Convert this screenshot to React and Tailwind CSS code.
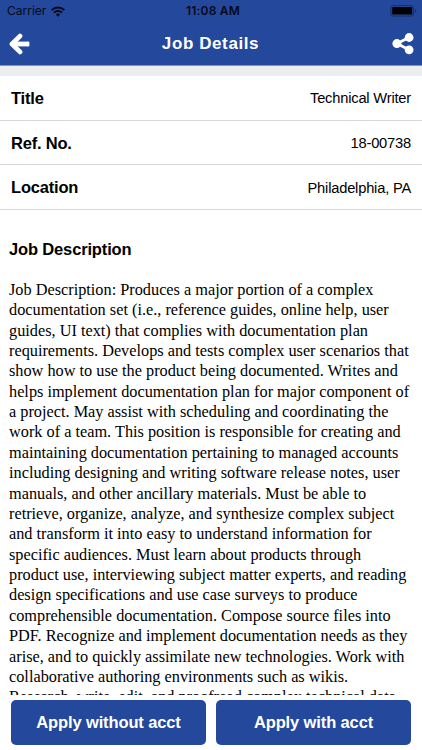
const details = [
  { label: 'Title', value: 'Technical Writer' },
  { label: 'Ref. No.', value: '18-00738' },
  { label: 'Location', value: 'Philadelphia, PA' },
];

const description = `Job Description: Produces a major portion of a complex
documentation set (i.e., reference guides, online help, user
guides, UI text) that complies with documentation plan
requirements. Develops and tests complex user scenarios that
show how to use the product being documented. Writes and
helps implement documentation plan for major component of
a project. May assist with scheduling and coordinating the
work of a team. This position is responsible for creating and
maintaining documentation pertaining to managed accounts
including designing and writing software release notes, user
manuals, and other ancillary materials. Must be able to
retrieve, organize, analyze, and synthesize complex subject
and transform it into easy to understand information for
specific audiences. Must learn about products through
product use, interviewing subject matter experts, and reading
design specifications and use case surveys to produce
comprehensible documentation. Compose source files into
PDF. Recognize and implement documentation needs as they
arise, and to quickly assimilate new technologies. Work with
collaborative authoring environments such as wikis.
Research, write, edit, and proofread complex technical data`;

const WifiIcon = () => (
  <svg width="14" height="11" viewBox="0 0 14 11" fill="none" stroke="#05081a" strokeWidth="1.9">
    <path d="M0.7 4.1a8.9 8.9 0 0 1 12.6 0" />
    <path d="M3 6.6a5.7 5.7 0 0 1 8 0" />
    <path d="M7 10.7 4.9 8.6a3 3 0 0 1 4.2 0z" fill="#05081a" stroke="none" />
  </svg>
);

const BatteryIcon = () => (
  <svg width="27" height="12" viewBox="0 0 27 12">
    <rect x="0.9" y="0.6" width="22.6" height="10.4" rx="2.2" fill="none" stroke="#162d66" strokeWidth="1" />
    <rect x="2.2" y="2" width="20" height="7.6" rx="0.8" fill="#000" />
    <path d="M25 4v3.8q1.4-.6 1.4-1.9T25 4z" fill="#162d66" />
  </svg>
);

const BackIcon = () => (
  <svg width="22" height="22" viewBox="0 0 22 22" fill="none" stroke="#fff" strokeWidth="4.8" strokeLinecap="round" strokeLinejoin="round">
    <path d="M12 3.1 4 11l8 7.9" />
    <path d="M5 11h15" strokeLinecap="butt" />
    <path d="M20.2 9.8v2.4" strokeWidth="2.4" />
  </svg>
);

const ShareIcon = () => (
  <svg width="22" height="22" viewBox="0 0 22 22" fill="#fff">
    <path d="M17 4.5 5 10.6l12 6.2" fill="none" stroke="#fff" strokeWidth="2.8" />
    <circle cx="4.9" cy="10.6" r="4.5" />
    <circle cx="17.1" cy="4.5" r="4.4" />
    <circle cx="17.1" cy="16.8" r="4.4" />
  </svg>
);

const App = () => {
  return (
    <div className="flex h-[750px] w-[422px] flex-col overflow-hidden bg-white font-['Liberation_Sans',sans-serif] text-black">
      {/* Status bar + navigation */}
      <header className="h-[66px] shrink-0 border-b border-[#7c91c5] bg-[#24489b]">
        <div className="grid h-[22px] grid-cols-3 items-center pr-[5px] pl-[7px] font-['Inter',sans-serif] text-[#05081a]">
          <div className="flex items-center gap-[5px]">
            <span className="text-[12px]">Carrier</span>
            <WifiIcon />
          </div>
          <span className="pl-[2px] text-center text-[12px] font-semibold tracking-[0.2px] whitespace-nowrap">
            11:08 AM
          </span>
          <div className="flex justify-end">
            <BatteryIcon />
          </div>
        </div>
        <div className="flex h-[43px] items-center justify-between pr-2 pl-2">
          <button aria-label="Back">
            <BackIcon />
          </button>
          <h1 className="pr-px text-[17px] font-bold tracking-[0.6px] text-white">Job Details</h1>
          <button aria-label="Share">
            <ShareIcon />
          </button>
        </div>
      </header>

      <div className="h-[10px] shrink-0 bg-[#ededed]" />

      <dl className="shrink-0">
        {details.map((item) => (
          <div
            key={item.label}
            className="flex h-[44.7px] items-center justify-between border-b border-[#d8d8d8] px-[11px] pt-px"
          >
            <dt className="text-[16.5px] font-bold tracking-[-0.2px]">{item.label}</dt>
            <dd className="text-[14.7px] tracking-[-0.2px]">{item.value}</dd>
          </div>
        ))}
      </dl>

      {/* Job description, cut off above the buttons */}
      <main className="min-h-0 flex-1 overflow-hidden pl-[9px]">
        <h2 className="mt-[27px] text-[16.5px] leading-6 font-bold tracking-[-0.15px]">Job Description</h2>
        <p className="mt-[18.7px] font-['Liberation_Serif',serif] text-[16.3px] leading-[20.37px] whitespace-pre">
          {description}
        </p>
      </main>

      <footer className="flex h-[55px] shrink-0 items-start gap-[10px] px-[11px] pt-[5px] text-[16.5px] font-bold tracking-[-0.12px] text-white">
        <button className="h-[45px] flex-1 rounded-[5px] bg-[#24489b]">Apply without acct</button>
        <button className="h-[45px] flex-1 rounded-[5px] bg-[#24489b]">Apply with acct</button>
      </footer>
    </div>
  );
};

export default App;
